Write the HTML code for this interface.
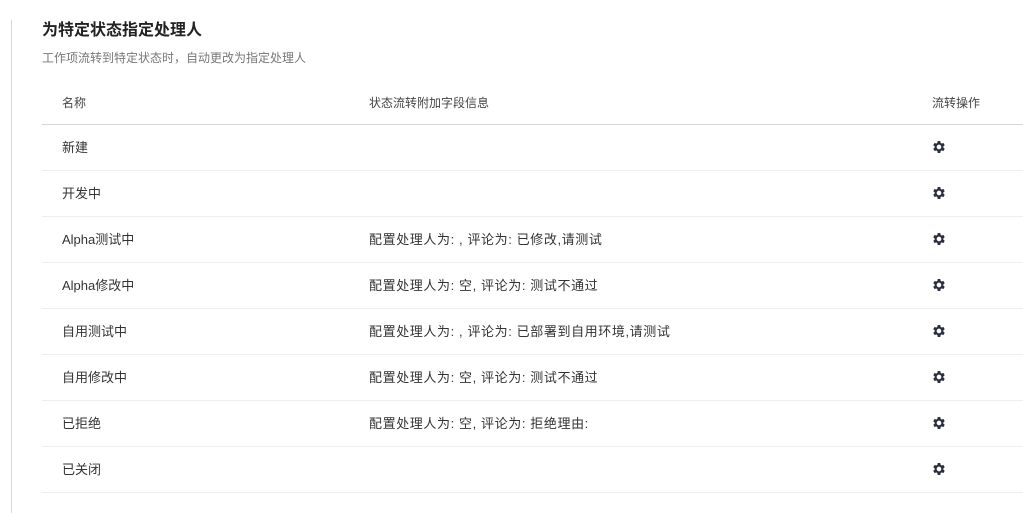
<!DOCTYPE html>
<html><head><meta charset="utf-8"><style>
body{margin:0;width:1023px;height:513px;background:#fff;font-family:"Liberation Sans","Noto Sans CJK SC",sans-serif;position:relative;overflow:hidden;color:#333}
.bar{position:absolute;left:11px;top:20px;width:1px;height:493px;background:#d5d5da}
h1{position:absolute;left:42px;top:20px;margin:0;font-size:16px;font-weight:bold;color:#222;line-height:22px}
.sub{position:absolute;left:42px;top:50px;font-size:12px;color:#777;line-height:16px}
.hd{position:absolute;left:42px;top:82px;width:981px;height:42px;border-bottom:1px solid #d5d5da;font-size:12px;color:#444}
.row{position:absolute;left:42px;width:981px;height:45px;border-bottom:1px solid #eeeef2;font-size:13px;color:#333}
.c{position:absolute;top:0;line-height:45px;white-space:nowrap}
.hd .c{line-height:42px}
.row .c2{letter-spacing:0.6px}
.c1{left:20px}.c2{left:327px}.c3{left:890px}
svg{position:absolute;left:889px;top:14px}
</style></head><body>
<div class="bar"></div>
<h1>为特定状态指定处理人</h1>
<div class="sub">工作项流转到特定状态时，自动更改为指定处理人</div>
<div class="hd"><span class="c c1">名称</span><span class="c c2">状态流转附加字段信息</span><span class="c c3">流转操作</span></div>

<div class="row" style="top:125px"><span class="c c1">新建</span><svg width="16" height="16" viewBox="0 0 24 24"><path fill="#2b2f3d" d="M19.4 13a7.5 7.5 0 000-2l2.1-1.6-2-3.5-2.5 1a7 7 0 00-1.7-1L14.9 3h-4l-.4 2.9a7 7 0 00-1.7 1l-2.5-1-2 3.5L6.4 11a7.5 7.5 0 000 2l-2.1 1.6 2 3.5 2.5-1a7 7 0 001.7 1l.4 2.9h4l.4-2.9a7 7 0 001.7-1l2.5 1 2-3.5zM12.9 15.5a3.5 3.5 0 110-7 3.5 3.5 0 010 7z" transform="translate(-0.9 0)"/></svg></div>
<div class="row" style="top:171px"><span class="c c1">开发中</span><svg width="16" height="16" viewBox="0 0 24 24"><path fill="#2b2f3d" d="M19.4 13a7.5 7.5 0 000-2l2.1-1.6-2-3.5-2.5 1a7 7 0 00-1.7-1L14.9 3h-4l-.4 2.9a7 7 0 00-1.7 1l-2.5-1-2 3.5L6.4 11a7.5 7.5 0 000 2l-2.1 1.6 2 3.5 2.5-1a7 7 0 001.7 1l.4 2.9h4l.4-2.9a7 7 0 001.7-1l2.5 1 2-3.5zM12.9 15.5a3.5 3.5 0 110-7 3.5 3.5 0 010 7z" transform="translate(-0.9 0)"/></svg></div>
<div class="row" style="top:217px"><span class="c c1">Alpha测试中</span><span class="c c2">配置处理人为: , 评论为: 已修改,请测试</span><svg width="16" height="16" viewBox="0 0 24 24"><path fill="#2b2f3d" d="M19.4 13a7.5 7.5 0 000-2l2.1-1.6-2-3.5-2.5 1a7 7 0 00-1.7-1L14.9 3h-4l-.4 2.9a7 7 0 00-1.7 1l-2.5-1-2 3.5L6.4 11a7.5 7.5 0 000 2l-2.1 1.6 2 3.5 2.5-1a7 7 0 001.7 1l.4 2.9h4l.4-2.9a7 7 0 001.7-1l2.5 1 2-3.5zM12.9 15.5a3.5 3.5 0 110-7 3.5 3.5 0 010 7z" transform="translate(-0.9 0)"/></svg></div>
<div class="row" style="top:263px"><span class="c c1">Alpha修改中</span><span class="c c2">配置处理人为: 空, 评论为: 测试不通过</span><svg width="16" height="16" viewBox="0 0 24 24"><path fill="#2b2f3d" d="M19.4 13a7.5 7.5 0 000-2l2.1-1.6-2-3.5-2.5 1a7 7 0 00-1.7-1L14.9 3h-4l-.4 2.9a7 7 0 00-1.7 1l-2.5-1-2 3.5L6.4 11a7.5 7.5 0 000 2l-2.1 1.6 2 3.5 2.5-1a7 7 0 001.7 1l.4 2.9h4l.4-2.9a7 7 0 001.7-1l2.5 1 2-3.5zM12.9 15.5a3.5 3.5 0 110-7 3.5 3.5 0 010 7z" transform="translate(-0.9 0)"/></svg></div>
<div class="row" style="top:309px"><span class="c c1">自用测试中</span><span class="c c2">配置处理人为: , 评论为: 已部署到自用环境,请测试</span><svg width="16" height="16" viewBox="0 0 24 24"><path fill="#2b2f3d" d="M19.4 13a7.5 7.5 0 000-2l2.1-1.6-2-3.5-2.5 1a7 7 0 00-1.7-1L14.9 3h-4l-.4 2.9a7 7 0 00-1.7 1l-2.5-1-2 3.5L6.4 11a7.5 7.5 0 000 2l-2.1 1.6 2 3.5 2.5-1a7 7 0 001.7 1l.4 2.9h4l.4-2.9a7 7 0 001.7-1l2.5 1 2-3.5zM12.9 15.5a3.5 3.5 0 110-7 3.5 3.5 0 010 7z" transform="translate(-0.9 0)"/></svg></div>
<div class="row" style="top:355px"><span class="c c1">自用修改中</span><span class="c c2">配置处理人为: 空, 评论为: 测试不通过</span><svg width="16" height="16" viewBox="0 0 24 24"><path fill="#2b2f3d" d="M19.4 13a7.5 7.5 0 000-2l2.1-1.6-2-3.5-2.5 1a7 7 0 00-1.7-1L14.9 3h-4l-.4 2.9a7 7 0 00-1.7 1l-2.5-1-2 3.5L6.4 11a7.5 7.5 0 000 2l-2.1 1.6 2 3.5 2.5-1a7 7 0 001.7 1l.4 2.9h4l.4-2.9a7 7 0 001.7-1l2.5 1 2-3.5zM12.9 15.5a3.5 3.5 0 110-7 3.5 3.5 0 010 7z" transform="translate(-0.9 0)"/></svg></div>
<div class="row" style="top:401px"><span class="c c1">已拒绝</span><span class="c c2">配置处理人为: 空, 评论为: 拒绝理由:</span><svg width="16" height="16" viewBox="0 0 24 24"><path fill="#2b2f3d" d="M19.4 13a7.5 7.5 0 000-2l2.1-1.6-2-3.5-2.5 1a7 7 0 00-1.7-1L14.9 3h-4l-.4 2.9a7 7 0 00-1.7 1l-2.5-1-2 3.5L6.4 11a7.5 7.5 0 000 2l-2.1 1.6 2 3.5 2.5-1a7 7 0 001.7 1l.4 2.9h4l.4-2.9a7 7 0 001.7-1l2.5 1 2-3.5zM12.9 15.5a3.5 3.5 0 110-7 3.5 3.5 0 010 7z" transform="translate(-0.9 0)"/></svg></div>
<div class="row" style="top:447px"><span class="c c1">已关闭</span><svg width="16" height="16" viewBox="0 0 24 24"><path fill="#2b2f3d" d="M19.4 13a7.5 7.5 0 000-2l2.1-1.6-2-3.5-2.5 1a7 7 0 00-1.7-1L14.9 3h-4l-.4 2.9a7 7 0 00-1.7 1l-2.5-1-2 3.5L6.4 11a7.5 7.5 0 000 2l-2.1 1.6 2 3.5 2.5-1a7 7 0 001.7 1l.4 2.9h4l.4-2.9a7 7 0 001.7-1l2.5 1 2-3.5zM12.9 15.5a3.5 3.5 0 110-7 3.5 3.5 0 010 7z" transform="translate(-0.9 0)"/></svg></div>
</body></html>
